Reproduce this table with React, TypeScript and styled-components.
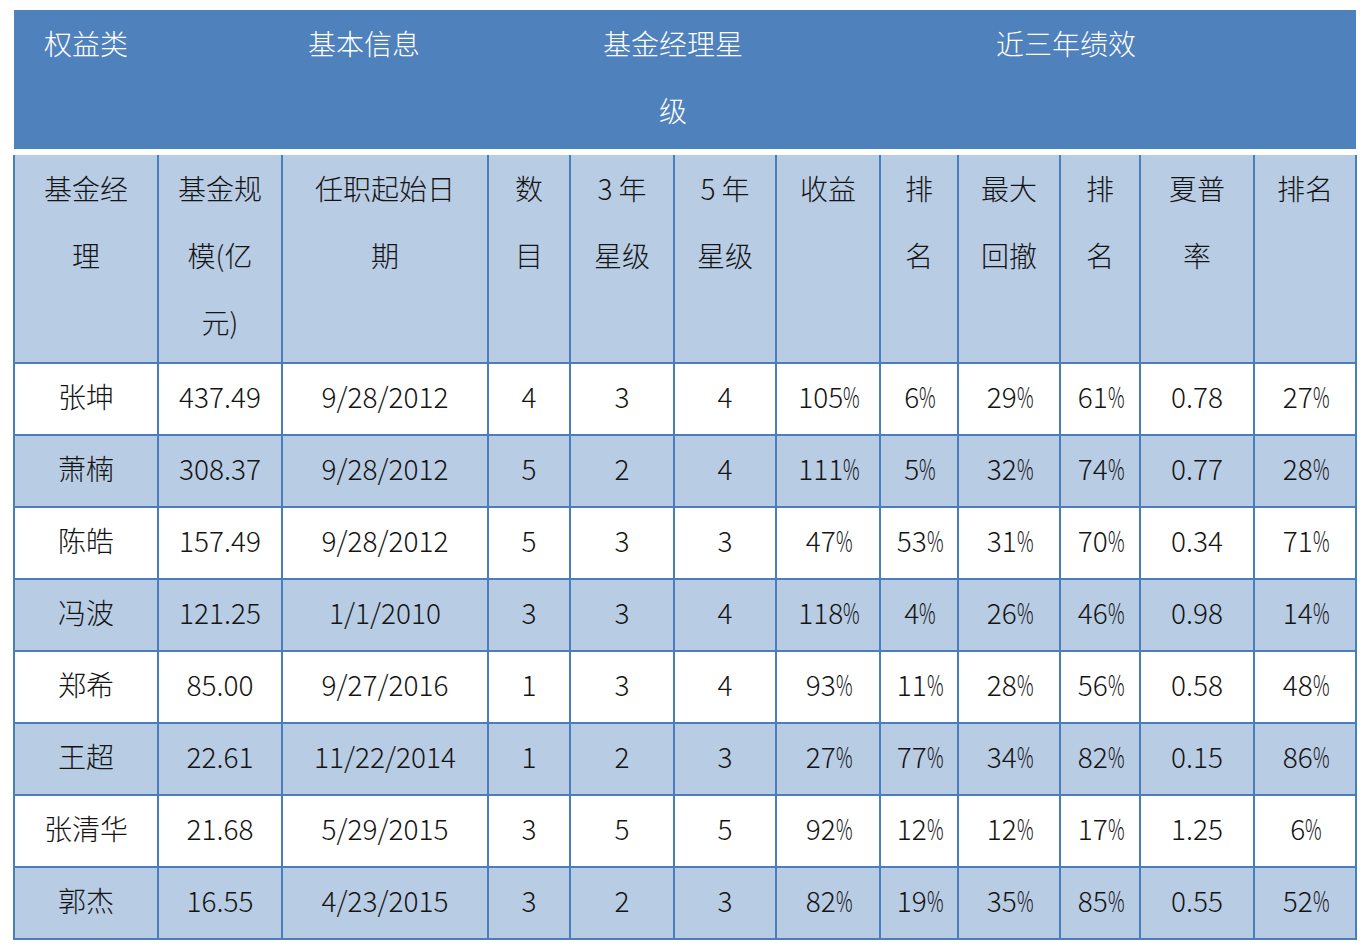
import React from "react";
import styled, { createGlobalStyle } from "styled-components";

const GlobalStyle = createGlobalStyle`
  html, body {
    margin: 0;
    padding: 0;
    background: #ffffff;
  }
  body {
    font-family: "Noto Sans CJK SC", "Noto Sans", sans-serif;
    color: #141414;
  }
`;

const BLUE = "#4f81bd";
const LINE = "#4a7dbd";
const LIGHT = "#b8cce4";

const Page = styled.div`
  padding: 10px 0 0 13px;
`;

const Table = styled.table`
  width: 1342px;
  border-collapse: collapse;
  table-layout: fixed;
  font-size: 28px;
  font-weight: 300;
`;

const BandCell = styled.th`
  background: ${BLUE};
  color: #ffffff;
  font-weight: 300;
  height: 139px;
  padding: 0;
  vertical-align: top;
  line-height: 68px;
  text-align: center;
  border-bottom: 6px solid #ffffff;
`;

const HeadCell = styled.th`
  background: ${LIGHT};
  font-weight: 300;
  height: 207px;
  padding: 0;
  vertical-align: top;
  line-height: 68px;
  text-align: center;
  border: 2px solid ${LINE};
  white-space: nowrap;
`;

const Line = styled.span`
  display: block;
  margin-top: -1px;
`;

const Row = styled.tr<{ $shaded: boolean }>`
  background: ${({ $shaded }) => ($shaded ? LIGHT : "#ffffff")};
`;

const Cell = styled.td`
  height: 64px;
  padding: 0 0 6px;
  text-align: center;
  vertical-align: middle;
  line-height: 1;
  border: 2px solid ${LINE};
  white-space: nowrap;
`;

// the narrow, condensed percent sign of the original sheet
const Pct = styled.span`
  display: inline-block;
  width: 0.52em;
  transform: scaleX(0.66);
  transform-origin: left center;
`;

const widths = [144, 124, 206, 82, 104, 102, 104, 78, 102, 80, 114, 102];

const band: { text: string[]; span: number }[] = [
  { text: ["权益类"], span: 1 },
  { text: ["基本信息"], span: 3 },
  { text: ["基金经理星", "级"], span: 2 },
  { text: ["近三年绩效"], span: 6 },
];

const heads: string[][] = [
  ["基金经", "理"],
  ["基金规", "模(亿", "元)"],
  ["任职起始日", "期"],
  ["数", "目"],
  ["3 年", "星级"],
  ["5 年", "星级"],
  ["收益"],
  ["排", "名"],
  ["最大", "回撤"],
  ["排", "名"],
  ["夏普", "率"],
  ["排名"],
];

const rows = [
  ["张坤", "437.49", "9/28/2012", "4", "3", "4", "105%", "6%", "29%", "61%", "0.78", "27%"],
  ["萧楠", "308.37", "9/28/2012", "5", "2", "4", "111%", "5%", "32%", "74%", "0.77", "28%"],
  ["陈皓", "157.49", "9/28/2012", "5", "3", "3", "47%", "53%", "31%", "70%", "0.34", "71%"],
  ["冯波", "121.25", "1/1/2010", "3", "3", "4", "118%", "4%", "26%", "46%", "0.98", "14%"],
  ["郑希", "85.00", "9/27/2016", "1", "3", "4", "93%", "11%", "28%", "56%", "0.58", "48%"],
  ["王超", "22.61", "11/22/2014", "1", "2", "3", "27%", "77%", "34%", "82%", "0.15", "86%"],
  ["张清华", "21.68", "5/29/2015", "3", "5", "5", "92%", "12%", "12%", "17%", "1.25", "6%"],
  ["郭杰", "16.55", "4/23/2015", "3", "2", "3", "82%", "19%", "35%", "85%", "0.55", "52%"],
];

const Value = ({ v }: { v: string }) =>
  v.endsWith("%") ? (
    <>
      {v.slice(0, -1)}
      <Pct>%</Pct>
    </>
  ) : (
    <>{v}</>
  );

export default function App() {
  return (
    <Page>
      <GlobalStyle />
      <Table>
        <colgroup>
          {widths.map((w, i) => (
            <col key={i} style={{ width: w }} />
          ))}
        </colgroup>
        <thead>
          <tr>
            {band.map((b, i) => (
              <BandCell key={i} colSpan={b.span}>
                {b.text.map((t, k) => (
                  <Line key={k}>{t}</Line>
                ))}
              </BandCell>
            ))}
          </tr>
          <tr>
            {heads.map((h, i) => (
              <HeadCell key={i}>
                {h.map((t, k) => (
                  <Line key={k}>{t}</Line>
                ))}
              </HeadCell>
            ))}
          </tr>
        </thead>
        <tbody>
          {rows.map((r, i) => (
            <Row key={i} $shaded={i % 2 === 1}>
              {r.map((v, j) => (
                <Cell key={j}>
                  <Value v={v} />
                </Cell>
              ))}
            </Row>
          ))}
        </tbody>
      </Table>
    </Page>
  );
}
